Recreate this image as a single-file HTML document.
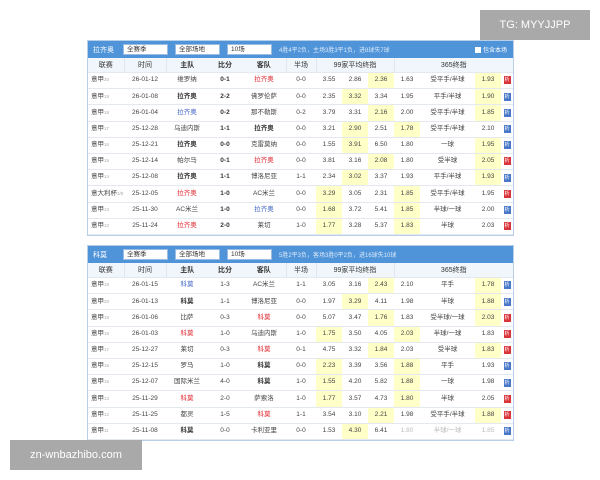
<!DOCTYPE html>
<html><head><meta charset="utf-8"><style>
body{margin:0;width:600px;height:480px;background:#fff;position:relative;overflow:hidden;font-family:"Liberation Sans","Noto Sans CJK SC",sans-serif;}
.w{position:absolute;left:87px;width:427px;border:1px solid #b7cfe9;box-sizing:border-box;}
.bar{height:17px;background:#4f94d8;color:#fff;font-size:7px;display:flex;align-items:center;white-space:nowrap}
.bar .t{width:30px;padding-left:5px}
.sel{background:#fff;color:#333;height:11px;line-height:9px;font-size:6.5px;padding-left:3px;box-sizing:border-box;margin-right:7px;border:1px solid #9bbbe0}
.bar .inf{color:#dbe9fa;font-size:6px}
.bar .chk{margin-left:auto;margin-right:6px;font-size:6px}
.bar .chk i{display:inline-block;width:6px;height:6px;background:#fff;margin-right:2px;vertical-align:-1px}
table{border-collapse:collapse;table-layout:fixed;width:425px;font-size:6.5px;color:#444;line-height:1}
td{height:15.2px;padding:0;text-align:center;vertical-align:middle;border-bottom:1px solid #e4e9ef;white-space:nowrap;overflow:hidden;line-height:1}
tr.h td{background:#f1f6fc;color:#333;font-size:7px;height:14px}
td.l{text-align:left;padding-left:3px}
td.l small{color:#aaa;font-size:4.5px;line-height:1}
.s{border-left:1px solid #e0e6ee}
.y{background:#ffffc8}
.r{color:#e0242b}
.b{color:#3e62c8}
.k{font-weight:bold;color:#333}
.ic{display:inline-block;width:7px;height:8px;color:#fff;font-size:5px;line-height:8px;vertical-align:middle}
.ir{background:#d9343a}.ib{background:#4a78c8}
.wm{position:absolute;background:#a9a9a9;color:#fff;font-size:12px;display:flex;align-items:center;justify-content:center}
</style></head><body>

<div class="w" style="top:40px">
<div class="bar"><span class="t">拉齐奥</span><span class="sel" style="width:45px">全赛季</span><span class="sel" style="width:45px">全部场地</span><span class="sel" style="width:45px">10场</span><span class="inf">4胜4平2负，主场3胜3平1负，进8球失7球</span><span class="chk"><i></i>包含本场</span></div>
<table>
<colgroup><col style="width:36px"><col style="width:42px"><col style="width:42px"><col style="width:34px"><col style="width:44px"><col style="width:30px"><col style="width:26px"><col style="width:26px"><col style="width:26px"><col style="width:26px"><col style="width:55px"><col style="width:26px"><col style="width:12px"></colgroup>
<tr class="h"><td>联赛</td><td class="s">时间</td><td class="s k">主队</td><td class="k">比分</td><td class="k">客队</td><td class="s">半场</td><td colspan="3" class="s">99家平均终指</td><td colspan="4" class="s">365终指</td></tr>
<tr><td class="l">意甲<small>20</small></td><td>26-01-12</td><td>维罗纳</td><td class="k">0-1</td><td class="r">拉齐奥</td><td>0-0</td><td>3.55</td><td>2.86</td><td class="y">2.36</td><td>1.63</td><td>受平手/半球</td><td class="y">1.93</td><td><span class="ic ir">析</span></td></tr>
<tr><td class="l">意甲<small>19</small></td><td>26-01-08</td><td class="k">拉齐奥</td><td class="k">2-2</td><td>佛罗伦萨</td><td>0-0</td><td>2.35</td><td class="y">3.32</td><td>3.34</td><td>1.95</td><td>平手/半球</td><td class="y">1.90</td><td><span class="ic ib">析</span></td></tr>
<tr><td class="l">意甲<small>18</small></td><td>26-01-04</td><td class="b">拉齐奥</td><td class="k">0-2</td><td>那不勒斯</td><td>0-2</td><td>3.79</td><td>3.31</td><td class="y">2.16</td><td>2.00</td><td>受平手/半球</td><td class="y">1.85</td><td><span class="ic ib">析</span></td></tr>
<tr><td class="l">意甲<small>17</small></td><td>25-12-28</td><td>乌迪内斯</td><td class="k">1-1</td><td class="k">拉齐奥</td><td>0-0</td><td>3.21</td><td class="y">2.90</td><td>2.51</td><td class="y">1.78</td><td>受平手/半球</td><td>2.10</td><td><span class="ic ib">析</span></td></tr>
<tr><td class="l">意甲<small>16</small></td><td>25-12-21</td><td class="k">拉齐奥</td><td class="k">0-0</td><td>克雷莫纳</td><td>0-0</td><td>1.55</td><td class="y">3.91</td><td>6.50</td><td>1.80</td><td>一球</td><td class="y">1.95</td><td><span class="ic ib">析</span></td></tr>
<tr><td class="l">意甲<small>15</small></td><td>25-12-14</td><td>帕尔马</td><td class="k">0-1</td><td class="r">拉齐奥</td><td>0-0</td><td>3.81</td><td>3.16</td><td class="y">2.08</td><td>1.80</td><td>受半球</td><td class="y">2.05</td><td><span class="ic ir">析</span></td></tr>
<tr><td class="l">意甲<small>14</small></td><td>25-12-08</td><td class="k">拉齐奥</td><td class="k">1-1</td><td>博洛尼亚</td><td>1-1</td><td>2.34</td><td class="y">3.02</td><td>3.37</td><td>1.93</td><td>平手/半球</td><td class="y">1.93</td><td><span class="ic ib">析</span></td></tr>
<tr><td class="l">意大利杯<small>1/8</small></td><td>25-12-05</td><td class="r">拉齐奥</td><td class="k">1-0</td><td>AC米兰</td><td>0-0</td><td class="y">3.29</td><td>3.05</td><td>2.31</td><td class="y">1.85</td><td>受平手/半球</td><td>1.95</td><td><span class="ic ir">析</span></td></tr>
<tr><td class="l">意甲<small>13</small></td><td>25-11-30</td><td>AC米兰</td><td class="k">1-0</td><td class="b">拉齐奥</td><td>0-0</td><td class="y">1.68</td><td>3.72</td><td>5.41</td><td class="y">1.85</td><td>半球/一球</td><td>2.00</td><td><span class="ic ib">析</span></td></tr>
<tr><td class="l">意甲<small>12</small></td><td>25-11-24</td><td class="r">拉齐奥</td><td class="k">2-0</td><td>莱切</td><td>1-0</td><td class="y">1.77</td><td>3.28</td><td>5.37</td><td class="y">1.83</td><td>半球</td><td>2.03</td><td><span class="ic ir">析</span></td></tr>
</table></div>

<div class="w" style="top:245px">
<div class="bar"><span class="t">科莫</span><span class="sel" style="width:45px">全赛季</span><span class="sel" style="width:45px">全部场地</span><span class="sel" style="width:45px">10场</span><span class="inf">5胜2平3负，客场3胜0平2负，进16球失10球</span></div>
<table>
<colgroup><col style="width:36px"><col style="width:42px"><col style="width:42px"><col style="width:34px"><col style="width:44px"><col style="width:30px"><col style="width:26px"><col style="width:26px"><col style="width:26px"><col style="width:26px"><col style="width:55px"><col style="width:26px"><col style="width:12px"></colgroup>
<tr class="h"><td>联赛</td><td class="s">时间</td><td class="s k">主队</td><td class="k">比分</td><td class="k">客队</td><td class="s">半场</td><td colspan="3" class="s">99家平均终指</td><td colspan="4" class="s">365终指</td></tr>
<tr><td class="l">意甲<small>18</small></td><td>26-01-15</td><td class="b">科莫</td><td>1-3</td><td>AC米兰</td><td>1-1</td><td>3.05</td><td>3.16</td><td class="y">2.43</td><td>2.10</td><td>平手</td><td class="y">1.78</td><td><span class="ic ib">析</span></td></tr>
<tr><td class="l">意甲<small>20</small></td><td>26-01-13</td><td class="k">科莫</td><td>1-1</td><td>博洛尼亚</td><td>0-0</td><td>1.97</td><td class="y">3.29</td><td>4.11</td><td>1.98</td><td>半球</td><td class="y">1.88</td><td><span class="ic ib">析</span></td></tr>
<tr><td class="l">意甲<small>19</small></td><td>26-01-06</td><td>比萨</td><td>0-3</td><td class="r">科莫</td><td>0-0</td><td>5.07</td><td>3.47</td><td class="y">1.76</td><td>1.83</td><td>受半球/一球</td><td class="y">2.03</td><td><span class="ic ir">析</span></td></tr>
<tr><td class="l">意甲<small>18</small></td><td>26-01-03</td><td class="r">科莫</td><td>1-0</td><td>乌迪内斯</td><td>1-0</td><td class="y">1.75</td><td>3.50</td><td>4.05</td><td class="y">2.03</td><td>半球/一球</td><td>1.83</td><td><span class="ic ir">析</span></td></tr>
<tr><td class="l">意甲<small>17</small></td><td>25-12-27</td><td>莱切</td><td>0-3</td><td class="r">科莫</td><td>0-1</td><td>4.75</td><td>3.32</td><td class="y">1.84</td><td>2.03</td><td>受半球</td><td class="y">1.83</td><td><span class="ic ir">析</span></td></tr>
<tr><td class="l">意甲<small>16</small></td><td>25-12-15</td><td>罗马</td><td>1-0</td><td class="k">科莫</td><td>0-0</td><td class="y">2.23</td><td>3.39</td><td>3.56</td><td class="y">1.88</td><td>平手</td><td>1.93</td><td><span class="ic ib">析</span></td></tr>
<tr><td class="l">意甲<small>15</small></td><td>25-12-07</td><td>国际米兰</td><td>4-0</td><td class="k">科莫</td><td>1-0</td><td class="y">1.55</td><td>4.20</td><td>5.82</td><td class="y">1.88</td><td>一球</td><td>1.98</td><td><span class="ic ib">析</span></td></tr>
<tr><td class="l">意甲<small>13</small></td><td>25-11-29</td><td class="r">科莫</td><td>2-0</td><td>萨索洛</td><td>1-0</td><td class="y">1.77</td><td>3.57</td><td>4.73</td><td class="y">1.80</td><td>半球</td><td>2.05</td><td><span class="ic ir">析</span></td></tr>
<tr><td class="l">意甲<small>12</small></td><td>25-11-25</td><td>都灵</td><td>1-5</td><td class="r">科莫</td><td>1-1</td><td>3.54</td><td>3.10</td><td class="y">2.21</td><td>1.98</td><td>受平手/半球</td><td class="y">1.88</td><td><span class="ic ir">析</span></td></tr>
<tr><td class="l">意甲<small>11</small></td><td>25-11-08</td><td class="k">科莫</td><td>0-0</td><td>卡利亚里</td><td>0-0</td><td>1.53</td><td class="y">4.30</td><td>6.41</td><td style="color:#bbb">1.80</td><td style="color:#bbb">半球/一球</td><td style="color:#bbb">1.85</td><td><span class="ic ib">析</span></td></tr>
</table></div>

<div class="wm" style="left:480px;top:10px;width:110px;height:30px;font-size:11px">TG: MYYJJPP</div>
<div class="wm" style="left:10px;top:440px;width:132px;height:30px;font-size:11px">zn-wnbazhibo.com</div>
</body></html>
